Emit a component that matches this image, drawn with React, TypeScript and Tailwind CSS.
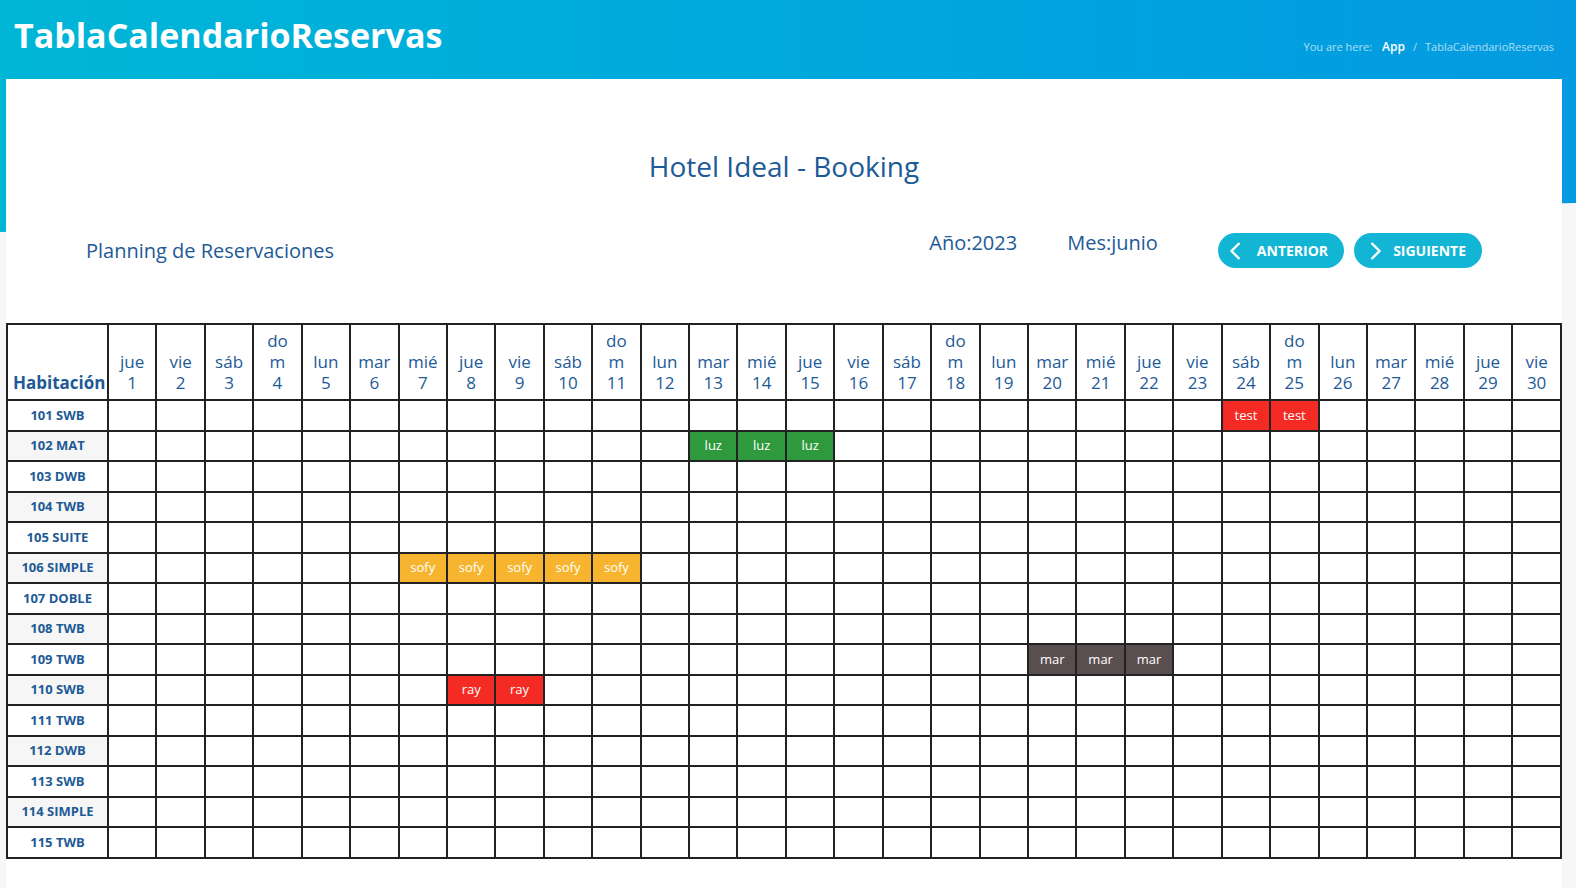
import React from 'react';

type Booking = { room: string; days: number[]; guest: string; color: string };

const rooms = [
  '101 SWB', '102 MAT', '103 DWB', '104 TWB', '105 SUITE', '106 SIMPLE', '107 DOBLE', '108 TWB',
  '109 TWB', '110 SWB', '111 TWB', '112 DWB', '113 SWB', '114 SIMPLE', '115 TWB',
];

const bookings: Booking[] = [
  { room: '101 SWB', days: [24, 25], guest: 'test', color: 'bg-[#f42b25]' },
  { room: '102 MAT', days: [13, 14, 15], guest: 'luz', color: 'bg-[#2e9a3d]' },
  { room: '106 SIMPLE', days: [7, 8, 9, 10, 11], guest: 'sofy', color: 'bg-[#f7b52f]' },
  { room: '109 TWB', days: [20, 21, 22], guest: 'mar', color: 'bg-[#5a4f4f]' },
  { room: '110 SWB', days: [8, 9], guest: 'ray', color: 'bg-[#f42b25]' },
];

const dayNames = ['dom', 'lun', 'mar', 'mié', 'jue', 'vie', 'sáb'];
const days = Array.from({ length: 30 }, (_, i) => i + 1);

const findBooking = (room: string, day: number) =>
  bookings.find((b) => b.room === room && b.days.includes(day));

const ChevronLeft = () => (
  <svg width="19" height="20" viewBox="0 0 19 20" fill="none">
    <path d="M11.5 2 L3.5 10 L11.5 18" stroke="white" strokeWidth="2.4" />
  </svg>
);

const ChevronRight = () => (
  <svg width="19" height="20" viewBox="0 0 19 20" fill="none">
    <path d="M7.5 2 L15.5 10 L7.5 18" stroke="white" strokeWidth="2.4" />
  </svg>
);

const App = () => {
  return (
    <div className="min-h-screen bg-[#f7f7f7] font-['Open_Sans',sans-serif]">
      {/* Top band */}
      <div className="h-[232px] bg-linear-to-r from-[#00b6d7] to-[#049ae1] [clip-path:polygon(0_0,100%_0,100%_87.5%,0_100%)]">
        <div className="flex items-start justify-between h-[79px] pl-[14px] pr-[22px]">
          <h1 className="pt-[12px] text-[34px] leading-[46px] font-bold text-white">TablaCalendarioReservas</h1>
          <div className="mt-[39px] flex items-center gap-[6px] text-[11px] leading-[16px] text-white/65">
            <span>You are here:</span>
            <span className="ml-[4px] text-[12px] font-semibold text-white">App</span>
            <span className="mx-[2px]">/</span>
            <span>TablaCalendarioReservas</span>
          </div>
        </div>
      </div>

      {/* Card */}
      <div className="relative -mt-[153px] ml-[6px] mr-[14px] bg-white pb-[40px]">
        <h2 className="pt-[68px] text-center text-[28px] leading-[38px] text-[#1d5a96]">Hotel Ideal - Booking</h2>

        <div className="mt-[48px] flex items-start px-[80px] text-[#1d5a96]">
          <div className="flex-1 mt-[4px] text-[20px] leading-[28px]">Planning de Reservaciones</div>
          <div className="-mt-[4px] flex gap-[50px] text-[20px] leading-[28px]">
            <span>Año:2023</span>
            <span>Mes:junio</span>
          </div>
          <div className="ml-[60px] flex gap-[10px]">
            <button className="flex items-center h-[35px] pl-[10px] pr-[16px] gap-[10px] rounded-full bg-[#12b5d3] text-white text-[14px] font-bold">
              <ChevronLeft />
              ANTERIOR
            </button>
            <button className="flex items-center h-[35px] pl-[10px] pr-[16px] gap-[10px] rounded-full bg-[#12b5d3] text-white text-[14px] font-bold">
              <ChevronRight />
              SIGUIENTE
            </button>
          </div>
        </div>

        <table className="mt-[55px] w-full table-fixed border-collapse text-[#1d5a96]">
          <colgroup>
            <col className="w-[101px]" />
            {days.map((d) => (
              <col key={d} />
            ))}
          </colgroup>
          <thead>
            <tr>
              <th className="h-[76px] border-2 border-[#222] align-bottom pb-[6px] pl-[5px] text-left text-[17px] leading-[21px] font-bold">
                Habitación
              </th>
              {days.map((d) => {
                const name = dayNames[new Date(2023, 5, d).getDay()];
                return (
                  <th key={d} className="border-2 border-[#222] align-bottom pb-[6px] px-0 text-center text-[17px] leading-[21px] font-normal">
                    {name === 'dom' ? (
                      <>
                        do
                        <br />m
                      </>
                    ) : (
                      name
                    )}
                    <br />
                    {d}
                  </th>
                );
              })}
            </tr>
          </thead>
          <tbody>
            {rooms.map((room, i) => (
              <tr key={room}>
                <td
                  className={`h-[30.5px] border-2 border-[#222] p-0 text-center text-[13px] font-bold ${
                    i % 2 === 1 ? 'bg-[#f5f6f5]' : 'bg-white'
                  }`}
                >
                  {room}
                </td>
                {days.map((d) => {
                  const b = findBooking(room, d);
                  return (
                    <td
                      key={d}
                      className={`border-2 border-[#222] p-0 text-center text-[13px] text-white ${b ? b.color : ''}`}
                    >
                      {b ? b.guest : ''}
                    </td>
                  );
                })}
              </tr>
            ))}
          </tbody>
        </table>
      </div>
    </div>
  );
};

export default App;
